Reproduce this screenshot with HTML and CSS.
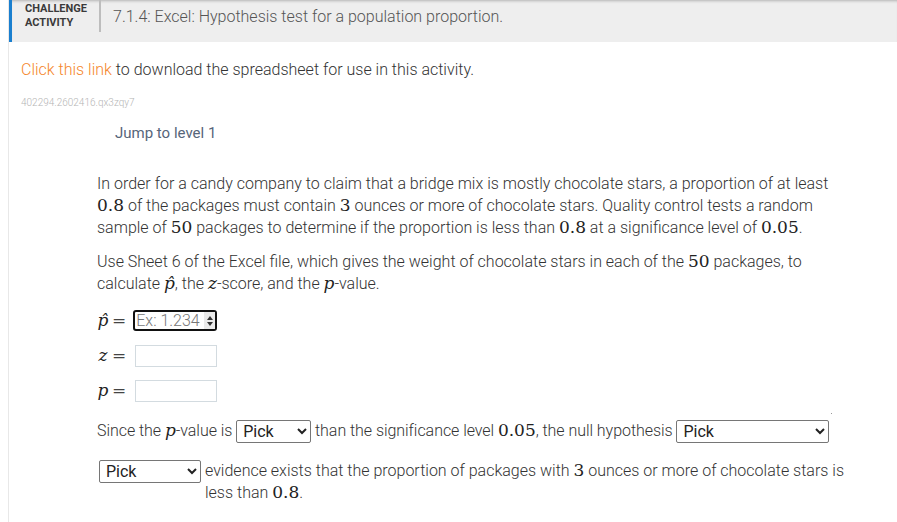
FILE: index.html
```html
<!DOCTYPE html>
<html>
<head>
<meta charset="utf-8">
<link rel="stylesheet" href="styles.css">
</head>
<body>
<div class="page">
  <div class="header">
    <div class="label">CHALLENGE<br>ACTIVITY</div>
    <div class="title">7.1.4: Excel: Hypothesis test for a population proportion.</div>
  </div>
  <div class="content">
    <p class="download"><a class="link">Click this link</a> to download the spreadsheet for use in this activity.</p>
    <div class="ident">402294.2602416.qx3zqy7</div>
    <div class="jump">Jump to level 1</div>
    <div class="question">
      <p class="para">In order for a candy company to claim that a bridge mix is mostly chocolate stars, a proportion of at least <span class="m">0.8</span> of the packages must contain <span class="m">3</span> ounces or more of chocolate stars. Quality control tests a random sample of <span class="m">50</span> packages to determine if the proportion is less than <span class="m">0.8</span> at a significance level of <span class="m">0.05</span>.</p>
      <p class="para last">Use Sheet 6 of the Excel file, which gives the weight of chocolate stars in each of the <span class="m">50</span> packages, to calculate <span class="m mi">p̂</span>, the <span class="m mi">z</span>-score, and the <span class="m mi">p</span>-value.</p>
      <div class="eq">
        <span class="m mi lhs">p̂</span><span class="m eqs">=</span>
        <span class="focus"><span class="ph">Ex: 1.234</span><span class="spin"><i class="up"></i><i class="down"></i></span></span>
      </div>
      <div class="eq">
        <span class="m mi lhs">z</span><span class="m eqs">=</span>
        <span class="box"></span>
      </div>
      <div class="eq">
        <span class="m mi lhs">p</span><span class="m eqs">=</span>
        <span class="box"></span>
      </div>
      <div class="since">Since the <span class="m mi">p</span>-value is <select class="sel s1"><option>Pick</option></select> than the significance level <span class="m">0.05</span>, the null hypothesis <select class="sel s2"><option>Pick</option></select><span class="dot"></span></div>
      <div class="concl">
        <select class="sel s3"><option>Pick</option></select>
        <div class="ctext">evidence exists that the proportion of packages with <span class="m">3</span> ounces or more of chocolate stars is less than <span class="m">0.8</span>.</div>
      </div>
    </div>
  </div>
</div>
</body>
</html>
```

FILE: styles.css
```css
html, body {
  margin: 0;
  padding: 0;
  background: #fff;
}
body {
  font-family: Roboto, "Liberation Sans", sans-serif;
  color: #333;
}
.page {
  margin-left: 8px;
  border-left: 1px solid #e8e8e8;
  min-height: 522px;
}
.header {
  height: 42px;
  background: #eeeeee;
  border-left: 3px solid #1a7fcf;
  display: flex;
  align-items: flex-start;
  box-shadow: inset 0 3px 3px -2px rgba(0,0,0,0.25);
}
.label {
  margin-left: 13px;
  padding-top: 2px;
  width: 74px;
  height: 30px;
  border-right: 2px solid #bdbdbd;
  font-size: 11px;
  font-weight: 700;
  line-height: 14px;
  color: #3a3a3a;
}
.title {
  margin-left: 12px;
  padding-top: 7px;
  font-size: 16px;
  font-weight: 300;
  color: #555;
}
.content {
  padding-left: 12px;
}
.download {
  margin: 18px 0 0 0;
  font-size: 16px;
  font-weight: 300;
  line-height: 20px;
  color: #333;
}
.link {
  color: #f5862a;
}
.ident {
  margin-top: 18px;
  font-size: 10px;
  line-height: 10px;
  color: #b5b5b5;
  font-weight: 300;
}
.jump {
  margin-top: 15px;
  margin-left: 94px;
  font-size: 15px;
  line-height: 20px;
  color: #56657a;
  font-weight: 400;
}
.question {
  margin-left: 76px;
  margin-top: 30px;
  width: 750px;
}
.para {
  margin: 0 0 12px 0;
  font-size: 16px;
  font-weight: 300;
  line-height: 22px;
  color: #333;
}
.para.last {
  margin-bottom: 8px;
}
.m {
  font-family: "DejaVu Serif", "Liberation Serif", serif;
  font-size: 17px;
  font-weight: 400;
  color: #222;
  line-height: 1;
}
.mi {
  font-style: italic;
}
.eq {
  display: flex;
  align-items: center;
  height: 35px;
}
.lhs {
  width: 12px;
  text-align: center;
}
.eqs {
  margin-left: 3px;
  margin-right: 9px;
  font-style: normal;
  color: #444;
}
.focus {
  display: flex;
  align-items: center;
  width: 80px;
  height: 17px;
  border: 2px solid #111;
  border-radius: 3px;
  margin-left: -2px;
}
.ph {
  font-size: 16px;
  font-weight: 300;
  color: #777;
  margin-left: 1px;
  flex: 1;
  line-height: 17px;
}
.spin {
  width: 11px;
  height: 17px;
  background: #eaeaea;
  display: flex;
  flex-direction: column;
  align-items: center;
  justify-content: center;
  gap: 2px;
}
.up {
  width: 0; height: 0;
  border-left: 3px solid transparent;
  border-right: 3px solid transparent;
  border-bottom: 4px solid #333;
}
.down {
  width: 0; height: 0;
  border-left: 3px solid transparent;
  border-right: 3px solid transparent;
  border-top: 4px solid #333;
}
.box {
  display: block;
  width: 80px;
  height: 20px;
  border: 1px solid #d3dbe0;
}
.since {
  margin-top: 11px;
  font-size: 16px;
  font-weight: 300;
  line-height: 24px;
  color: #333;
  position: relative;
  letter-spacing: -0.05px;
}
.dot {
  position: absolute;
  left: 734px;
  top: -6px;
  width: 1px;
  height: 1px;
  background: #999;
}
.sel {
  font-family: Roboto, "Liberation Sans", sans-serif;
  font-size: 16px;
  font-weight: 400;
  color: #222;
  height: 23px;
  border: 1px solid #767676;
  border-radius: 2px;
  background: #fff;
  padding: 0 0 0 2px;
  vertical-align: middle;
  margin: 0;
}
.s1 { width: 75px; }
.s2 { width: 153px; }
.s3 { width: 102px; margin: 0 4px 0 2px; flex: none; }
.concl {
  display: flex;
  align-items: flex-start;
  margin-top: 17px;
  font-size: 16px;
  font-weight: 300;
  line-height: 22px;
}
.ctext {
  flex: 1;
}
```
